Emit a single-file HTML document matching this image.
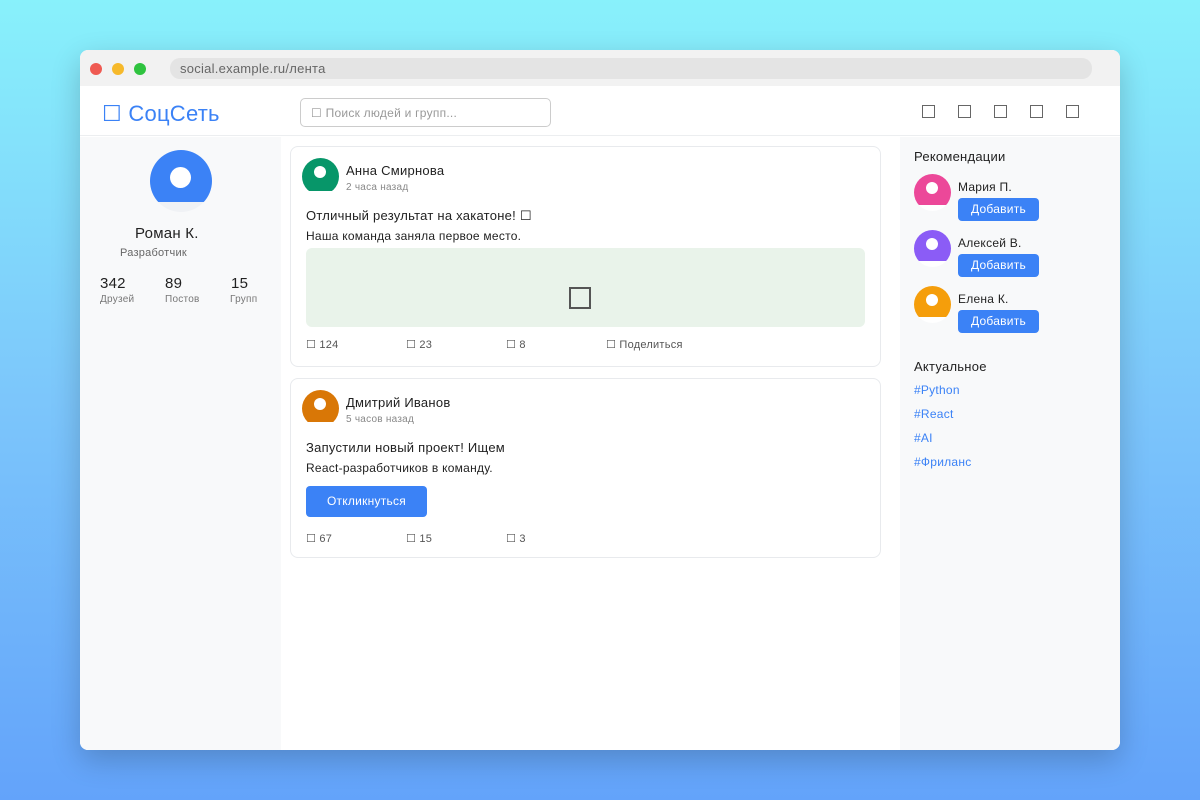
<!DOCTYPE html>
<html><head><meta charset="utf-8"><style>
*{box-sizing:border-box;margin:0;padding:0}
body{width:1200px;height:800px;overflow:hidden;background:linear-gradient(180deg,#88f1fb 0%,#7cc6fb 50%,#63a3fa 100%);font-family:"Liberation Sans","DejaVu Sans",sans-serif;position:relative;letter-spacing:0.25px}
.win{position:absolute;left:80px;top:50px;width:1040px;height:700px;background:#fff;border-radius:8px;overflow:hidden;box-shadow:0 10px 30px rgba(0,0,0,.2)}
.bar{position:absolute;left:0;top:0;width:1040px;height:36px;background:#f2f2f2}
.dot{position:absolute;top:13px;width:12px;height:12px;border-radius:50%}
.url{position:absolute;left:90px;top:8px;width:922px;height:21px;background:#e4e4e4;border-radius:10px;font-size:13px;color:#666;padding:3px 10px}
.hdr{position:absolute;left:0;top:36px;width:1040px;height:50px;background:#fff;border-bottom:1px solid #eceef0}
.abs{position:absolute}
.left{position:absolute;left:0;top:87px;width:201px;height:613px;background:#f8f9fa}
.right{position:absolute;left:820px;top:87px;width:220px;height:613px;background:#f8f9fa}
.av{position:absolute;border-radius:50%;overflow:hidden}
.av i{position:absolute;border-radius:50%;background:#fff}
.card{position:absolute;left:210px;width:591px;border:1px solid #e8eaed;border-radius:8px;background:#fff}
.t{position:absolute;white-space:nowrap}
.btn{position:absolute;background:#3b82f6;color:#fff;border-radius:4px;font-size:12px;text-align:center}
.ic{display:inline-block;width:13px;height:13px;border:1.5px solid #666}
</style></head><body>
<div class="win">
<div class="bar">
<div class="dot" style="left:10px;background:#ef5a52"></div>
<div class="dot" style="left:32px;background:#f6b92b"></div>
<div class="dot" style="left:54px;background:#2fc33f"></div>
<div class="url">social.example.ru/лента</div>
</div>
<div class="hdr">
<div class="t" style="left:22px;top:15px;font-size:22px;color:#3b82f6;">☐ СоцСеть</div>
<div class="abs" style="left:220px;top:12px;width:251px;height:29px;border:1px solid #ccc;border-radius:5px;font-size:12px;color:#999;padding:7px 10px">☐ Поиск людей и групп...</div>
<div class="abs" style="left:842px;top:19px"><span class="ic"></span></div>
<div class="abs" style="left:878px;top:19px"><span class="ic"></span></div>
<div class="abs" style="left:914px;top:19px"><span class="ic"></span></div>
<div class="abs" style="left:950px;top:19px"><span class="ic"></span></div>
<div class="abs" style="left:986px;top:19px"><span class="ic"></span></div>
</div>
<div class="left">
<div class="av" style="left:70px;top:13px;width:62px;height:62px;background:linear-gradient(#3b82f6 0 52px,#f0f2f5 52px)"><i style="left:20px;top:17px;width:21px;height:21px"></i></div>
<div class="t" style="left:55px;top:88px;font-size:15px;color:#222">Роман К.</div>
<div class="t" style="left:40px;top:110px;font-size:11px;color:#666">Разработчик</div>
<div class="t" style="left:20px;top:138px;font-size:15px;color:#222">342</div>
<div class="t" style="left:85px;top:138px;font-size:15px;color:#222">89</div>
<div class="t" style="left:151px;top:138px;font-size:15px;color:#222">15</div>
<div class="t" style="left:20px;top:157px;font-size:10px;color:#777">Друзей</div>
<div class="t" style="left:85px;top:157px;font-size:10px;color:#777">Постов</div>
<div class="t" style="left:150px;top:157px;font-size:10px;color:#777">Групп</div>
</div>
<div class="card" style="top:96px;height:221px">
<div class="av" style="left:11px;top:11px;width:37px;height:37px;background:linear-gradient(#079669 0 33px,#fff 33px)"><i style="left:12px;top:8px;width:12px;height:12px"></i></div>
<div class="t" style="left:55px;top:16px;font-size:13px;color:#222">Анна Смирнова</div>
<div class="t" style="left:55px;top:35px;font-size:10px;color:#888">2 часа назад</div>
<div class="t" style="left:15px;top:61px;font-size:13px;color:#222">Отличный результат на хакатоне! ☐</div>
<div class="t" style="left:15px;top:82px;font-size:12px;color:#222">Наша команда заняла первое место.</div>
<div class="abs" style="left:15px;top:101px;width:559px;height:79px;background:#e9f3ea;border-radius:6px"><div class="abs" style="left:263px;top:39px;width:22px;height:22px;border:2px solid #555"></div></div>
<div class="t" style="left:15px;top:191px;font-size:11px;color:#555">☐ 124</div>
<div class="t" style="left:115px;top:191px;font-size:11px;color:#555">☐ 23</div>
<div class="t" style="left:215px;top:191px;font-size:11px;color:#555">☐ 8</div>
<div class="t" style="left:315px;top:191px;font-size:11px;color:#555">☐ Поделиться</div>
</div>
<div class="card" style="top:328px;height:180px">
<div class="av" style="left:11px;top:11px;width:37px;height:37px;background:linear-gradient(#d97706 0 32px,#fff 32px)"><i style="left:12px;top:8px;width:12px;height:12px"></i></div>
<div class="t" style="left:55px;top:16px;font-size:13px;color:#222">Дмитрий Иванов</div>
<div class="t" style="left:55px;top:35px;font-size:10px;color:#888">5 часов назад</div>
<div class="t" style="left:15px;top:61px;font-size:13px;color:#222">Запустили новый проект! Ищем</div>
<div class="t" style="left:15px;top:82px;font-size:12px;color:#222">React-разработчиков в команду.</div>
<div class="btn" style="left:15px;top:107px;width:121px;height:31px;line-height:31px;font-size:12px">Откликнуться</div>
<div class="t" style="left:15px;top:153px;font-size:11px;color:#555">☐ 67</div>
<div class="t" style="left:115px;top:153px;font-size:11px;color:#555">☐ 15</div>
<div class="t" style="left:215px;top:153px;font-size:11px;color:#555">☐ 3</div>
</div>
<div class="right">
<div class="t" style="left:14px;top:12px;font-size:13px;color:#222">Рекомендации</div>
<div class="av" style="left:14px;top:37px;width:37px;height:37px;background:linear-gradient(#ec4899 0 31px,#fff 31px)"><i style="left:12px;top:8px;width:12px;height:12px"></i></div>
<div class="t" style="left:58px;top:43px;font-size:12px;color:#222">Мария П.</div>
<div class="btn" style="left:58px;top:61px;width:81px;height:23px;line-height:23px">Добавить</div>
<div class="av" style="left:14px;top:93px;width:37px;height:37px;background:linear-gradient(#8b5cf6 0 31px,#fff 31px)"><i style="left:12px;top:8px;width:12px;height:12px"></i></div>
<div class="t" style="left:58px;top:99px;font-size:12px;color:#222">Алексей В.</div>
<div class="btn" style="left:58px;top:117px;width:81px;height:23px;line-height:23px">Добавить</div>
<div class="av" style="left:14px;top:149px;width:37px;height:37px;background:linear-gradient(#f59e0b 0 31px,#fff 31px)"><i style="left:12px;top:8px;width:12px;height:12px"></i></div>
<div class="t" style="left:58px;top:155px;font-size:12px;color:#222">Елена К.</div>
<div class="btn" style="left:58px;top:173px;width:81px;height:23px;line-height:23px">Добавить</div>
<div class="t" style="left:14px;top:222px;font-size:13px;color:#222">Актуальное</div>
<div class="t" style="left:14px;top:246px;font-size:12px;color:#3b82f6">#Python</div>
<div class="t" style="left:14px;top:270px;font-size:12px;color:#3b82f6">#React</div>
<div class="t" style="left:14px;top:294px;font-size:12px;color:#3b82f6">#AI</div>
<div class="t" style="left:14px;top:318px;font-size:12px;color:#3b82f6">#Фриланс</div>
</div>
</div>
</body></html>
